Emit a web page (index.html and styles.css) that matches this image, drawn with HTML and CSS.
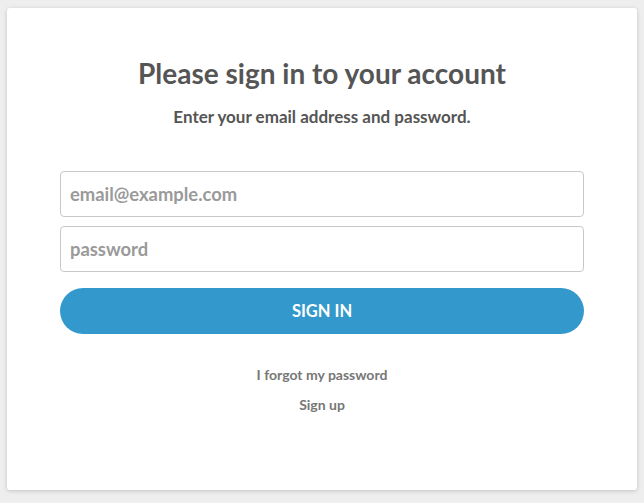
FILE: index.html
```html
<!DOCTYPE html>
<html lang="en">
<head>
<meta charset="utf-8">
<title>Sign in</title>
<link rel="stylesheet" href="styles.css">
</head>
<body>
<main class="card">
  <h1 class="title">Please sign in to your account</h1>
  <p class="subtitle">Enter your email address and password.</p>
  <form class="form">
    <input class="field" type="email" placeholder="email@example.com" autofocus>
    <input class="field" type="password" placeholder="password">
    <button class="btn" type="button">SIGN IN</button>
  </form>
  <nav class="links">
    <a class="link" href="#">I forgot my password</a>
    <a class="link" href="#">Sign up</a>
  </nav>
</main>
</body>
</html>
```
FILE: styles.css
```css
html, body {
  margin: 0;
  padding: 0;
  background: #eeeeee;
}
body {
  padding: 8px 7px 13px 7px;
  font-family: Lato, "Open Sans", sans-serif;
  color: #555;
}
.card {
  background: #fff;
  border-radius: 3px;
  box-shadow: 0 1px 4px rgba(0,0,0,0.18);
  height: 482px;
  box-sizing: border-box;
  padding: 48px 53px 0;
  display: flex;
  flex-direction: column;
  align-items: stretch;
}
.title {
  margin: 0;
  text-align: center;
  font-size: 28px;
  font-weight: 700;
  line-height: 34px;
  color: #555;
}
.subtitle {
  margin: 17px 0 0;
  text-align: center;
  font-size: 17px;
  font-weight: 700;
  line-height: 20px;
  color: #555;
}
.form {
  margin-top: 44px;
  display: flex;
  flex-direction: column;
}
.field {
  height: 46px;
  box-sizing: border-box;
  border: 1px solid #c8c8c8;
  border-radius: 4px;
  padding: 0 9px;
  font-family: Lato, sans-serif;
  font-size: 18.4px;
  font-weight: 700;
  color: #555;
  caret-color: #333;
  margin-bottom: 9px;
  outline: none;
}
.field::placeholder {
  color: #9a9a9a;
}
.btn {
  margin-top: 7px;
  height: 46px;
  border: none;
  border-radius: 23px;
  background: #3399cc;
  color: #fff;
  font-family: Lato, sans-serif;
  font-size: 16.5px;
  font-weight: 700;
}
.links {
  margin-top: 31px;
  display: flex;
  flex-direction: column;
  align-items: center;
  gap: 11px;
}
.link {
  font-size: 14px;
  font-weight: 700;
  line-height: 19px;
  color: #777;
  text-decoration: none;
}
```
